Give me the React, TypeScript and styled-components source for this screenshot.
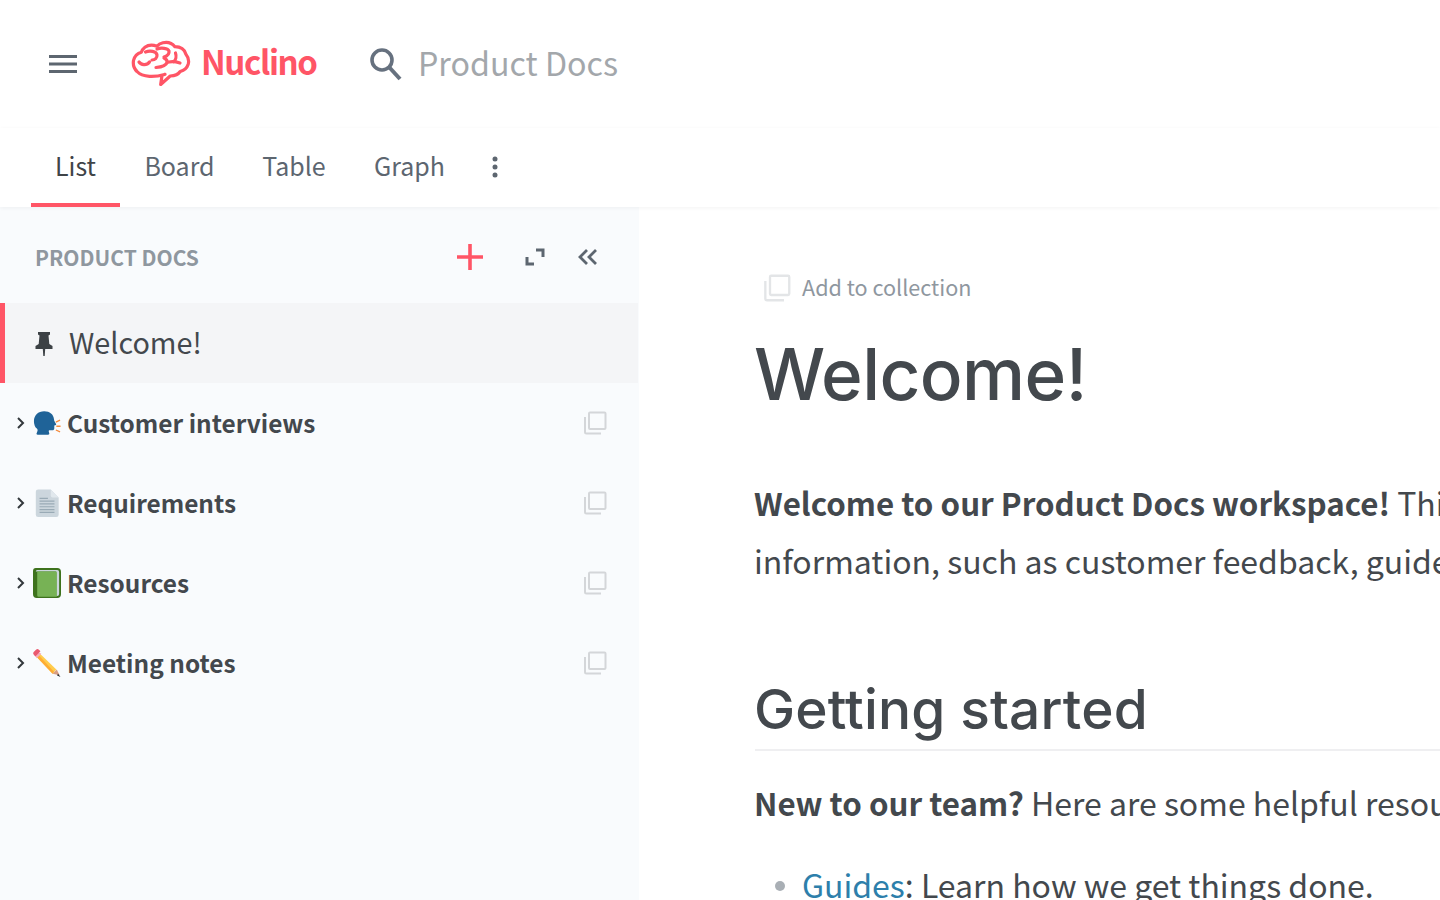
import React from "react";
import styled, { createGlobalStyle } from "styled-components";

const SANS = `"Noto Sans CJK SC", "Noto Sans", sans-serif`;
const HEAD = `Inter, "Liberation Sans", Arial, sans-serif`;

const Global = createGlobalStyle`
  html, body { margin: 0; padding: 0; height: 100%; overflow: hidden; background: #fff; }
  #root { height: 100%; }
  * { box-sizing: border-box; }
`;

const Page = styled.div`
  width: 1440px; height: 900px; overflow: hidden; display: flex; flex-direction: column;
  font-family: ${SANS}; color: #43484d; background: #fff;
`;
const TopBar = styled.header`
  height: 128px; flex: none; display: flex; align-items: center; padding-left: 49px;
`;
const Menu = styled.svg`width: 28px; height: 20px; flex: none;`;
const Brand = styled.div`display: flex; align-items: center; margin-left: 54px; gap: 10px; width: 187px;`;
const Logo = styled.svg`width: 60px; height: 46px; flex: none; margin-bottom: 3px;`;
const BrandName = styled.span`
  font-size: 33px; font-weight: 700; color: #ff5566; line-height: 44px; letter-spacing: -1.400px; margin-bottom: 6px;
`;
const Search = styled.div`display: flex; align-items: center; margin-left: 50px; gap: 16px;`;
const SearchIcon = styled.svg`width: 34px; height: 34px; flex: none;`;
const SearchText = styled.span`font-size: 32.2px; line-height: 44px; color: #a3a7ab; margin-bottom: 4px;`;

const Tabs = styled.nav`
  height: 79px; flex: none; display: flex; padding-left: 31px; position: relative; z-index: 2;
  box-shadow: 0 1px 4px rgba(0,0,0,.05);
`;
const Tab = styled.div<{ $active?: boolean; $w: number }>`
  width: ${p => p.$w}px; height: 79px; display: flex; justify-content: center; padding-top: 19px;
  font-size: 25px; line-height: 36px; color: ${p => (p.$active ? "#3f4448" : "#5d6670")};
  border-bottom: 4px solid ${p => (p.$active ? "#ff5566" : "transparent")};
`;
const More = styled.svg`width: 8px; height: 22px; margin: 28px 0 0 21px;`;

const Body = styled.div`flex: 1; display: flex; min-height: 0;`;
const Side = styled.aside`width: 639px; flex: none; background: #f9fbfd;`;
const SideHead = styled.div`
  height: 96px; display: flex; align-items: center; padding-left: 35px;
`;
const SideTitle = styled.div`
  font-size: 21px; font-weight: 600; color: #8f979f; flex: 1; margin-top: 4px;
`;
const HeadIcons = styled.div`display: flex; align-items: center; padding-right: 40px; margin-top: 4px;`;
const Plus = styled.svg`width: 26px; height: 26px; margin-right: 42px;`;
const Expand = styled.svg`width: 20px; height: 20px; margin-right: 32px;`;
const Collapse = styled.svg`width: 22px; height: 20px;`;
const Pinned = styled.div`
  width: 638px; height: 80px; background: #f4f5f7; border-left: 5px solid #ff5566;
  display: flex; align-items: center; padding: 0 0 4px 30px; gap: 16px;
  font-size: 28.800px; color: #43484d;
`;
const Pin = styled.svg`width: 18px; height: 24px; flex: none; margin-top: 6px;`;
const Row = styled.div`
  width: 638px; height: 80px; display: flex; align-items: center; padding: 0 31px 0 15px;
`;
const Arrow = styled.svg`width: 12px; height: 14px; flex: none;`;
const Emoji = styled.svg`width: 28px; height: 30px; flex: none; margin-left: 6px;`;
const RowLabel = styled.span`
  flex: 1; margin-left: 6px; font-size: 24.400px; font-weight: 600; color: #43484d; line-height: 36px;
`;
const Main = styled.main`flex: 1; min-width: 0; padding: 61px 0 0 116px; overflow: hidden;`;
const Collection = styled.div`
  display: flex; align-items: center; gap: 11px; height: 40px; margin-left: 8px;
`;
const CollectionLabel = styled.span`font-size: 21.600px; color: #8f979f; margin-bottom: 4px;`;
const H1 = styled.h1`
  font-family: ${HEAD}; font-weight: 500; font-size: 71px; line-height: 84px; margin: 24px 0 0 -1px;
  color: #43484d; letter-spacing: -0.6px;
`;
const Para = styled.p`
  margin: 58px 0 0 -1px; font-size: 32px; line-height: 57.500px; color: #43484d; white-space: nowrap; width: 1000px;
  b { font-weight: 600; font-size: 31.300px; }
`;
const H2 = styled.h2`
  font-family: ${HEAD}; font-weight: 500; font-size: 55px; line-height: 66px; margin: 87px 0 0;
  color: #43484d; padding-bottom: 7px; border-bottom: 2px solid #efeff1; text-indent: -1px; letter-spacing: 0.15px;
`;
const Para2 = styled(Para)`margin-top: 23px;`;
const List = styled.ul`margin: 23px 0 0; padding: 0 0 0 47px; font-size: 32px; line-height: 58px; white-space: nowrap; color: #43484d; list-style: none;`;
const Item = styled.li`
  position: relative;
  &::before { content: ""; position: absolute; left: -27px; top: 26px; width: 10px; height: 10px; border-radius: 50%; background: #a9afb5; }
  a { color: #2d7fab; text-decoration: none; }
`;
const Copy = styled.svg<{ $s: number }>`width: ${p => p.$s}px; height: ${p => p.$s}px; flex: none;`;

const CopyIcon = ({ s = 24, c = "#d4d6d9" }: { s?: number; c?: string }) => (
  <Copy $s={s} viewBox="0 0 24 24" fill="none" stroke={c} strokeWidth="2">
    <rect x="6" y="1.500" width="16.500" height="16.500" rx="1" />
    <path d="M2 6v15a1.500 1.500 0 0 0 1.500 1.500H18" />
  </Copy>
);
const Chevron = () => (
  <Arrow viewBox="0 0 12 14" fill="none" stroke="#33383c" strokeWidth="2">
    <path d="M3 2l5 5-5 5" />
  </Arrow>
);

const Talking = () => (
  <Emoji viewBox="0 -1.500 30 30">
    <path fill="#1f6398" d="M12 1c6 0 10 3.500 10.500 8.500.1 1 .2 1.600.7 2.400l1.500 2.700c.4.700 0 1.200-.8 1.400l-1.100.3v2.700c0 1.600-.9 2.400-2.400 2.300l-2.300-.1c-1 0-1.400.5-1.200 1.400l.5 2c.2 1.100-.3 1.400-1.200 1.400H5c-1 0-1.500-.5-1.100-1.400l.9-2.600c.3-1 .1-1.700-.7-2.600C2.300 18 1 15 1 11.500 1 5.500 5.500 1 12 1z"/>
    <path fill="none" stroke="#f58a3c" strokeWidth="1.400" d="M24.500 12.500l4.500-2M25 17h4.500M24.500 21l4.500 2"/>
  </Emoji>
);
const PageIcon = () => (
  <Emoji viewBox="0 0 30 30">
    <path fill="#ccd6dd" d="M3 3a2.500 2.500 0 0 1 2.500-2.500H19L27.500 9v18.500a2.500 2.500 0 0 1-2.500 2.500H5.500A2.500 2.500 0 0 1 3 27.500z"/>
    <path fill="#e1e8ed" d="M19 .5V7a2 2 0 0 0 2 2h6.500z"/>
    <path stroke="#99aab5" strokeWidth="1.300" d="M7 10h9M7 13h16M7 16h16M7 19h16M7 22h16M7 25h16"/>
  </Emoji>
);
const Book = () => (
  <Emoji viewBox="0 0 30 30" preserveAspectRatio="none">
    <path fill="#3e721d" d="M3 0h23a4 4 0 0 1 4 4v22a4 4 0 0 1-4 4H4a4 4 0 0 1-4-4V3a3 3 0 0 1 3-3z"/>
    <path fill="#ccd6dd" d="M3 3.500a1.500 1.500 0 0 1 1.500-1.500H26a2 2 0 0 1 2 2v22a2 2 0 0 1-2 2h-1V3.500z"/>
    <path fill="#77b255" d="M4.500 3.500H24a1.500 1.500 0 0 1 1.500 1.500v23.800H6a1.500 1.500 0 0 1-1.500-1.500z"/>
  </Emoji>
);
const Pencil = () => (
  <Emoji viewBox="0 0 30 30">
    <path fill="#ffcc4d" d="M7 4.500l18 17.500-4 4.500L3.500 8z"/>
    <path fill="#ffac33" d="M3.500 8l17.500 18.500 1.500-2L5.500 6z"/>
    <path fill="#f4abba" d="M2 3h3l4 2-5 5-2-3z"/>
    <path fill="#ea596e" d="M3.500.5a2 2 0 0 1 2.500 0L8 2.500 2.500 8 .5 5.500A2 2 0 0 1 1 3z"/>
    <path fill="#d99e82" d="M21 26.500l4.500-4.500 3 6z"/>
    <path fill="#292f33" d="M26.800 26.500L29.500 30 25.800 28.500z"/>
  </Emoji>
);
const items: [string, React.ReactNode][] = [
  ["Customer interviews", <Talking />],
  ["Requirements", <PageIcon />],
  ["Resources", <Book />],
  ["Meeting notes", <Pencil />],
];

export default function App() {
  return (
    <Page>
      <Global />
      <TopBar>
        <Menu viewBox="0 0 28 20" fill="#5d6670">
          <rect x="0" y="1" width="28" height="3" />
          <rect x="0" y="8.500" width="28" height="3" />
          <rect x="0" y="16" width="28" height="3" />
        </Menu>
        <Brand>
          <Logo viewBox="0 0 60 46" fill="none" stroke="#ff5566" strokeWidth="3.200" strokeLinecap="round" strokeLinejoin="round">
            <path d="M31 35.500L29.700 44.500l9.500-8.500c4.500-.3 8-1.500 10-4.500 3.500-1 6.800-3.500 8-7.300 1-3.700.2-7-2.300-10-1.500-5-5.500-7.500-11-7.500-3-3.800-7.500-5-12-4-2.500.5-4.500 1.700-6 3.500-4-1.500-8.800-1.300-12 1-2 1.500-3 3-3.500 5-4 1-7 4.500-7.900 8.300-.7 4.200.5 8 3.500 11 2.800 3 7.500 4.500 12.500 4.800 7.500.4 12-1 15.500-2z" />
            <path d="M8 22c2 3 7.500 4 10.500 0M14.500 12c4-1.500 11-1 11.500 3 .3 3-2 5-5 5M26 9c4-1.500 11-1 12 2 .5 3-2 5-5 6M33 18c2 1 3.500 2.500 3 4.500-.8 3-6 4.500-11 5M38 22c4-1 8 0 11 1M44.500 13c1 3 .5 7-2 9" />
          </Logo>
          <BrandName>Nuclino</BrandName>
        </Brand>
        <Search>
          <SearchIcon viewBox="0 0 34 34" fill="none" stroke="#66717f" strokeWidth="3.600">
            <circle cx="14" cy="13" r="10" />
            <path d="M21 20l11 12" strokeWidth="4" />
          </SearchIcon>
          <SearchText>Product Docs</SearchText>
        </Search>
      </TopBar>
      <Tabs>
        <Tab $active $w={89}>List</Tab>
        <Tab $w={119}>Board</Tab>
        <Tab $w={110}>Table</Tab>
        <Tab $w={121}>Graph</Tab>
        <More viewBox="0 0 8 22" fill="#5d6670">
          <circle cx="4" cy="3" r="2.500" /><circle cx="4" cy="11" r="2.500" /><circle cx="4" cy="19" r="2.500" />
        </More>
      </Tabs>
      <Body>
        <Side>
          <SideHead>
            <SideTitle>PRODUCT DOCS</SideTitle>
            <HeadIcons>
              <Plus viewBox="0 0 26 26" stroke="#ff5566" strokeWidth="3.600"><path d="M13 0v26M0 13h26" /></Plus>
              <Expand viewBox="0 0 20 20" fill="none" stroke="#5d6670" strokeWidth="3"><path d="M11 3h7v7M9 17H2v-7" /></Expand>
              <Collapse viewBox="0 0 22 20" fill="none" stroke="#5d6670" strokeWidth="2.800"><path d="M10 3l-7 7 7 7M19 3l-7 7 7 7" /></Collapse>
            </HeadIcons>
          </SideHead>
          <Pinned>
            <Pin viewBox="0 0 18 24" fill="#3c4145">
              <path d="M3 0h12v2.500l-1.500 1 .8 8.500 3.200 2v3H.5v-3l3.200-2 .8-8.500L3 2.500zM7.800 17h2.400l-.5 7H8.300z" />
            </Pin>
            Welcome!
          </Pinned>
          {items.map(([label, icon]) => (
            <Row key={label}>
              <Chevron />
              {icon}
              <RowLabel>{label}</RowLabel>
              <CopyIcon />
            </Row>
          ))}
        </Side>
        <Main>
          <Collection>
            <CopyIcon s={28} c="#e3e5e7" />
            <CollectionLabel>Add to collection</CollectionLabel>
          </Collection>
          <H1>Welcome!</H1>
          <Para>
            <b>Welcome to our Product Docs workspace!</b> This is where we collect all of our product
            <br />
            information, such as customer feedback, guides and more.
          </Para>
          <H2>Getting started</H2>
          <Para2><b>New to our team?</b> Here are some helpful resources to get you started.</Para2>
          <List>
            <Item><a>Guides</a>: Learn how we get things done.</Item>
          </List>
        </Main>
      </Body>
    </Page>
  );
}
